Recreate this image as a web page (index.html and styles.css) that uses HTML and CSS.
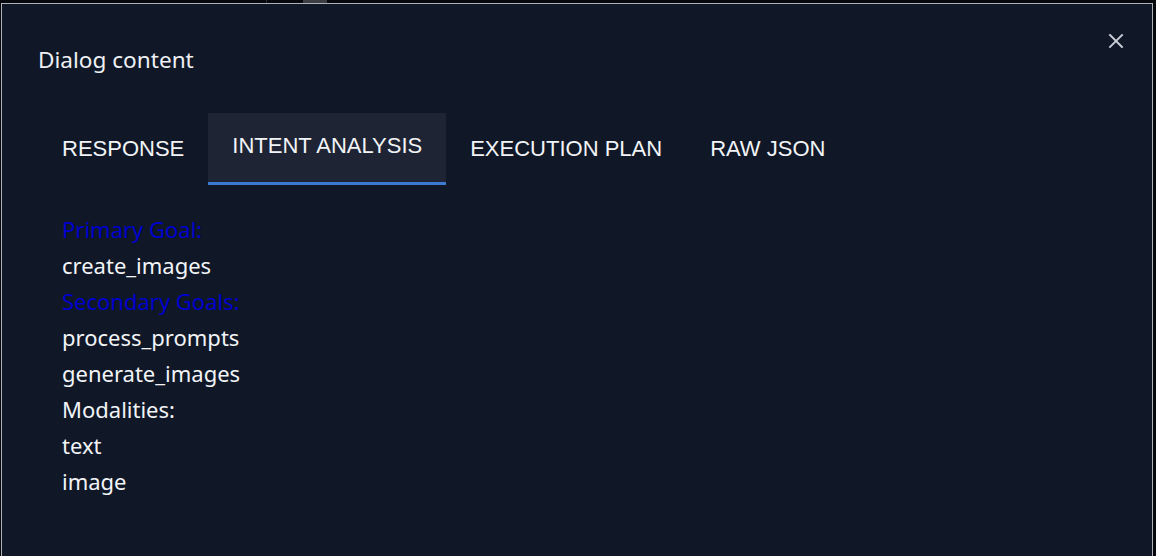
FILE: index.html
```html
<!DOCTYPE html>
<html lang="en">
<head>
<meta charset="utf-8">
<title>Dialog</title>
<link rel="stylesheet" href="styles.css">
</head>
<body>
<div class="backdrop-strip"><span class="strip-line"></span><span class="strip-thumb"></span></div>
<div class="dialog">
  <button class="close" aria-label="close">
    <svg width="16" height="16" viewBox="0 0 16 16"><path d="M2 2 L14 14 M14 2 L2 14" stroke="#c9ced6" stroke-width="1.9" stroke-linecap="square"/></svg>
  </button>
  <h2 class="title">Dialog content</h2>
  <div class="tabs">
    <div class="tab">RESPONSE</div>
    <div class="tab active">INTENT ANALYSIS</div>
    <div class="tab">EXECUTION PLAN</div>
    <div class="tab">RAW JSON</div>
  </div>
  <div class="panel">
    <div class="label">Primary Goal:</div>
    <div class="line">create_images</div>
    <div class="label">Secondary Goals:</div>
    <div class="line">process_prompts</div>
    <div class="line">generate_images</div>
    <div class="line">Modalities:</div>
    <div class="line">text</div>
    <div class="line">image</div>
  </div>
</div>
</body>
</html>
```

FILE: styles.css
```css
html, body {
  margin: 0;
  padding: 0;
  height: 100%;
  overflow: hidden;
}
body {
  background: #07080b;
  font-family: "Noto Sans", "Open Sans", sans-serif;
}
.backdrop-strip {
  height: 3px;
  display: flex;
}
.strip-line {
  margin-left: 266px;
  width: 1px;
  background: #2a2d33;
}
.strip-thumb {
  margin-left: 36px;
  width: 24px;
  background: #3c3e44;
}
.dialog {
  position: relative;
  margin-left: 1px;
  width: 1152px;
  height: 560px;
  background: #101828;
  border: 1px solid #aeb3bb;
  padding: 0 0 0 36px;
  box-sizing: border-box;
}
.close {
  position: absolute;
  top: 29px;
  right: 28px;
  width: 16px;
  height: 16px;
  padding: 0;
  border: 0;
  background: none;
  display: flex;
}
.title {
  margin: 0;
  padding-top: 40px;
  font-size: 22.6px;
  line-height: 32px;
  font-weight: 400;
  color: #eef0f3;
}
.tabs {
  display: flex;
  margin-top: 37px;
}
.tab {
  height: 72px;
  padding: 0 24px;
  display: flex;
  align-items: center;
  font-family: "Liberation Sans", Arial, sans-serif;
  font-size: 22px;
  color: #f2f4f7;
  box-sizing: border-box;
}
.tab.active {
  background: #1e2434;
  border-bottom: 3px solid #3a7bd0;
  padding-bottom: 4px;
}
.panel {
  padding: 26px 0 0 24px;
  font-size: 22px;
  line-height: 36px;
  color: #f2f4f7;
}
.label {
  color: #0000cd;
}
```
